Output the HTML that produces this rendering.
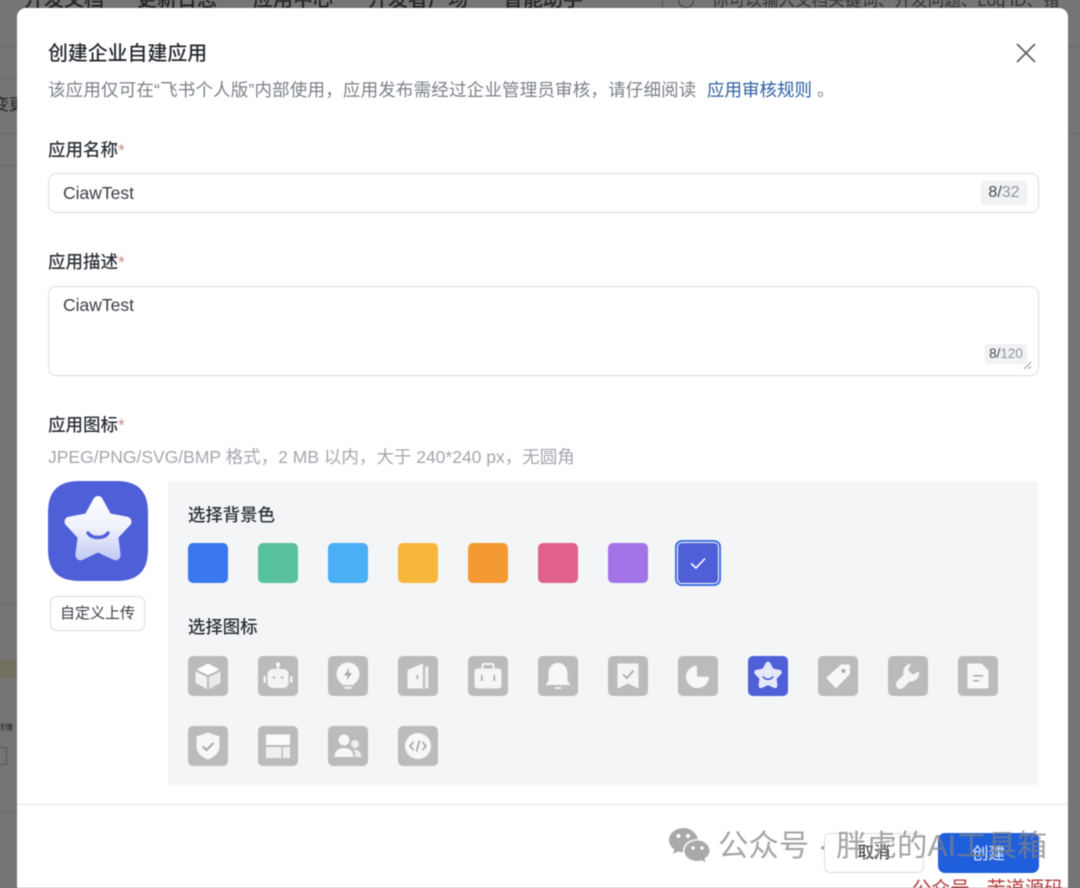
<!DOCTYPE html>
<html lang="zh">
<head>
<meta charset="utf-8">
<title>创建企业自建应用</title>
<style>
html,body{margin:0;padding:0;width:1080px;height:888px;overflow:hidden;background:#757575}
#w{position:absolute;left:0;top:0;width:1080px;height:888px;overflow:hidden;background:#757575;font-family:"Liberation Sans","Noto Sans CJK SC",sans-serif;color:#1f2329;filter:blur(.45px)}
.a{position:absolute;white-space:nowrap}
.modal{position:absolute;left:17px;top:8px;width:1051px;height:880px;background:#fff;border-radius:9px 9px 0 0;overflow:hidden}
.lab{position:absolute;left:48px;font-size:17.5px;line-height:24px;font-weight:500;color:#2b2f36;white-space:nowrap}
.lab i{font-style:normal;color:#c98a8a;font-weight:400}
.inp{position:absolute;left:47.5px;width:989px;background:#fff;border:1.5px solid #dcdde0;border-radius:8px}
.val{position:absolute;left:63px;font-size:17.5px;line-height:24px;color:#3a3e44}
.cnt{position:absolute;background:#f1f2f3;border-radius:3px;text-align:center;color:#8f959e}
.cnt b{font-weight:400;color:#444a52}
.c{position:absolute;top:543px;width:40px;height:40px;border-radius:5px}
.t{position:absolute;width:40px;height:40px;border-radius:5px;background:#b9bbbd}
.t svg{display:block;width:40px;height:40px}
.nav{position:absolute;top:-12px;font-size:20px;line-height:24px;color:#222;font-weight:500;white-space:nowrap}
</style>
</head>
<body>
<div id="w">
<!-- background page -->
<div class="nav" style="left:24px">开发文档</div>
<div class="nav" style="left:137px">更新日志</div>
<div class="nav" style="left:253px">应用中心</div>
<div class="nav" style="left:368px">开发者广场</div>
<div class="nav" style="left:503px">智能助手</div>
<div class="a" style="left:662px;top:0;width:1px;height:8px;background:#555"></div>
<div class="a" style="left:678px;top:-8px;width:14px;height:14px;border:1.5px solid #3a3a3a;border-radius:50%"></div>
<div class="a" style="left:712px;top:-11px;font-size:16.6px;line-height:24px;color:#333">你可以输入文档关键词、开发问题、Log ID、错</div>
<div class="a" style="left:0;top:46px;width:17px;height:1px;background:#666"></div>
<div class="a" style="left:0;top:78px;width:17px;height:1px;background:#666"></div>
<div class="a" style="left:0;top:133px;width:17px;height:1px;background:#666"></div>
<div class="a" style="left:0;top:165px;width:17px;height:1px;background:#666"></div>
<div class="a" style="left:-7px;top:94px;font-size:16px;line-height:24px;color:#222">变更</div>
<div class="a" style="left:0;top:603px;width:17px;height:1px;background:#666"></div>
<div class="a" style="left:0;top:660px;width:17px;height:18px;background:#74705f"></div>
<div class="a" style="left:-3px;top:722px;font-size:8px;line-height:12px;color:#222">详情</div>
<div class="a" style="left:-12px;top:747px;width:17px;height:16px;border:1px solid #555;border-radius:2px"></div>
<div class="a" style="left:0;top:812px;width:17px;height:1px;background:#666"></div>
<div class="a" style="left:1068px;top:46px;width:12px;height:1px;background:#666"></div>
<div class="a" style="left:1068px;top:133px;width:12px;height:1px;background:#666"></div>

<div class="modal"></div>

<div class="a" style="left:48px;top:41px;font-size:19.9px;line-height:26px;font-weight:500;color:#24282e">创建企业自建应用</div>
<svg class="a" style="left:1015px;top:42px" width="22" height="22" viewBox="0 0 22 22"><path d="M2 2L20 20M20 2L2 20" stroke="#5f6368" stroke-width="1.8" fill="none"/></svg>
<div class="a" style="left:48px;top:78px;font-size:17.5px;letter-spacing:.18px;line-height:24px;color:#7b8087">该应用仅可在“飞书个人版”内部使用，应用发布需经过企业管理员审核，请仔细阅读</div>
<div class="a" style="left:707px;top:78px;font-size:17.5px;line-height:24px;color:#2f5f9f">应用审核规则</div>
<div class="a" style="left:817px;top:78px;font-size:17.5px;line-height:24px;color:#7b8087">。</div>

<div class="lab" style="top:138px">应用名称<i>*</i></div>
<div class="inp" style="top:173px;height:37.5px"></div>
<div class="val" style="top:181px">CiawTest</div>
<div class="cnt" style="left:981px;top:181px;width:46px;height:24px;line-height:24px;font-size:16px"><b>8/</b>32</div>

<div class="lab" style="top:250px">应用描述<i>*</i></div>
<div class="inp" style="top:286px;height:87.500px"></div>
<div class="val" style="top:293px">CiawTest</div>
<div class="cnt" style="left:985px;top:344px;width:42px;height:20px;line-height:20px;font-size:13.5px"><b>8/</b>120</div>
<svg class="a" style="left:1023px;top:361px" width="10" height="9" viewBox="0 0 10 9"><path d="M1 8L8 1M5 8L8 5" stroke="#9a9ea3" stroke-width="1" fill="none"/></svg>

<div class="lab" style="top:413px">应用图标<i>*</i></div>
<div class="a" style="left:48px;top:445px;font-size:17.5px;line-height:24px;color:#a3a7ad">JPEG/PNG/SVG/BMP 格式，2 MB 以内，大于 240*240 px，无圆角</div>

<!-- big icon -->
<svg class="a" style="left:48px;top:481px" width="100" height="100" viewBox="0 0 100 100">
<defs>
<linearGradient id="g" gradientUnits="userSpaceOnUse" x1="0" y1="15" x2="0" y2="80"><stop offset="0" stop-color="#ffffff"/><stop offset=".5" stop-color="#eef0fb"/><stop offset="1" stop-color="#c0c8f3"/></linearGradient>
</defs>
<path d="M32 0H68C90 0 100 10 100 32V68C100 90 90 100 68 100H32C10 100 0 90 0 68V32C0 10 10 0 32 0Z" fill="#4f5fd8"/>
<path d="M50 20L59.400 37.100L78.500 40.700L65.200 54.900L67.600 74.300L50 66L32.400 74.300L34.800 54.900L21.500 40.700L40.600 37.100Z" fill="url(#g)" stroke="url(#g)" stroke-width="10" stroke-linejoin="round"/>
<path d="M40 52C44 58 56 58 60 52" stroke="#4f5fd8" stroke-width="3.400" stroke-linecap="round" fill="none"/>
</svg>
<div class="a" style="left:50px;top:596px;width:93px;height:33px;border:1.5px solid #dcdde0;border-radius:6px;background:#fff;text-align:center;line-height:33px;font-size:15px;color:#3a3e44">自定义上传</div>

<!-- panel -->
<div class="a" style="left:168px;top:481px;width:870px;height:304px;background:#f3f5f7;border-radius:2px"></div>
<div class="a" style="left:188px;top:503px;font-size:17.4px;line-height:24px;font-weight:500;color:#2b2f36">选择背景色</div>
<div class="c" style="left:188px;background:#3a78f0"></div>
<div class="c" style="left:258px;background:#58c2a0"></div>
<div class="c" style="left:328px;background:#4aaff5"></div>
<div class="c" style="left:398px;background:#f7b63c"></div>
<div class="c" style="left:468px;background:#f39a33"></div>
<div class="c" style="left:538px;background:#e0608e"></div>
<div class="c" style="left:608px;background:#a274e8"></div>
<div class="a" style="left:675px;top:540px;width:42px;height:42px;border:2px solid #3f6fe0;border-radius:7px;background:#fff"></div>
<svg class="a" style="left:678px;top:543px" width="40" height="40" viewBox="0 0 40 40"><rect width="40" height="40" rx="4" fill="#4f5fd8"/><path d="M13 20.500L18 25L27 15.500" stroke="#fff" stroke-width="1.600" fill="none"/></svg>

<div class="a" style="left:188px;top:615px;font-size:17.4px;line-height:24px;font-weight:500;color:#2b2f36">选择图标</div>

<!-- icon grid -->
<div class="t" style="left:188px;top:656px"><svg viewBox="0 0 40 40"><path d="M20 7.500L31.500 13.500L20 19L8.500 13.500Z" fill="#fff"/><path d="M7.500 15.500L19 21V33L7.500 27Z" fill="#f1f2f3"/><path d="M32.500 15.500L21 21V33L32.500 27Z" fill="#e9eaec"/></svg></div>
<div class="t" style="left:258px;top:656px"><svg viewBox="0 0 40 40"><rect x="19" y="8" width="2" height="6" fill="#fff"/><circle cx="20" cy="8.500" r="2" fill="#fff"/><rect x="9.500" y="13" width="21" height="19" rx="5" fill="#f3f4f5"/><rect x="5.500" y="20" width="2.500" height="7" rx="1.200" fill="#f3f4f5"/><rect x="32" y="20" width="2.500" height="7" rx="1.200" fill="#f3f4f5"/><circle cx="16" cy="21.500" r="1.300" fill="#b6b8ba"/><circle cx="24" cy="21.500" r="1.300" fill="#b6b8ba"/></svg></div>
<div class="t" style="left:328px;top:656px"><svg viewBox="0 0 40 40"><path d="M20 6.500A11.500 11.500 0 0 1 26 27.800V29H14V27.800A11.500 11.500 0 0 1 20 6.500Z" fill="#f6f7f8"/><rect x="16" y="30.500" width="8" height="2.500" rx="1.200" fill="#eceded"/><path d="M21.500 11.500L16 19.500H19.500L18.500 24.500L24 17H20.500Z" fill="#a6a8ab"/></svg></div>
<div class="t" style="left:398px;top:656px"><svg viewBox="0 0 40 40"><path d="M9.500 14L25 7.500V32.500H11C10 32.500 9.500 32 9.500 31Z" fill="#f4f5f6"/><rect x="27" y="10.500" width="3.500" height="22" rx="1" fill="#eeeff0"/><rect x="18.500" y="19" width="1.600" height="4" fill="#a6a8ab"/></svg></div>
<div class="t" style="left:468px;top:656px"><svg viewBox="0 0 40 40"><path d="M14.500 12.500V9.500C14.500 8.500 15 8 16 8H24C25 8 25.500 8.500 25.500 9.500V12.500" stroke="#f4f5f6" stroke-width="2" fill="none"/><rect x="6.500" y="12.500" width="27" height="20" rx="3" fill="#f4f5f6"/><rect x="13" y="19" width="1.600" height="6" fill="#a6a8ab"/><rect x="25.500" y="19" width="1.600" height="6" fill="#a6a8ab"/></svg></div>
<div class="t" style="left:538px;top:656px"><svg viewBox="0 0 40 40"><path d="M20 7C26.500 7 29.500 12 29.500 18V24.500L32.500 29H7.500L10.500 24.500V18C10.500 12 13.500 7 20 7Z" fill="#f6f7f8"/><rect x="16.500" y="31" width="7" height="2" rx="1" fill="#eeeff0"/></svg></div>
<div class="t" style="left:608px;top:656px"><svg viewBox="0 0 40 40"><path d="M9.500 7.500H30.500V32.500L20 27.500L9.500 32.500Z" fill="#f4f5f6"/><path d="M15 18.500L19 22L25.500 14.500" stroke="#a6a8ab" stroke-width="1.800" fill="none"/></svg></div>
<div class="t" style="left:678px;top:656px"><svg viewBox="0 0 40 40"><path d="M19 9.500V20.500L31 21C31 27.500 25.500 32 19.500 32A11.200 11.200 0 0 1 19 9.500Z" fill="#f6f7f8"/></svg></div>
<div class="t" style="left:748px;top:656px;background:#4f5fd8"><svg viewBox="0 0 40 40"><g transform="scale(.4)"><path d="M50 20L59.400 37.100L78.500 40.700L65.200 54.900L67.600 74.300L50 66L32.400 74.300L34.800 54.900L21.500 40.700L40.600 37.100Z" fill="#e6e9fa" stroke="#e6e9fa" stroke-width="12" stroke-linejoin="round"/><path d="M38 52C43 60 57 60 62 52" stroke="#4f5fd8" stroke-width="4" stroke-linecap="round" fill="none"/></g></svg></div>
<div class="t" style="left:818px;top:656px"><svg viewBox="0 0 40 40"><path d="M23 8.500H31C31.600 8.500 32 9 32 9.500V18L18 32.500L8 22Z" fill="#f6f7f8"/><circle cx="25.500" cy="15" r="2" fill="#a6a8ab"/></svg></div>
<div class="t" style="left:888px;top:656px"><svg viewBox="0 0 40 40"><path d="M23 7.500L20 14L24.500 18.500L31 15.500C32 21.500 27.500 26 21.500 25.500L15 32C12.500 34 8.500 32.500 8 29C7.800 27.500 8.200 26 9.500 25L15.500 19C14.500 12.500 18 8 23 7.500Z" fill="#f4f5f6"/></svg></div>
<div class="t" style="left:958px;top:656px"><svg viewBox="0 0 40 40"><path d="M10.500 7.500H23.500L30.500 14.500V31C30.500 32 30 32.500 29 32.500H11C10 32.500 9.500 32 9.500 31V8.500C9.500 8 10 7.500 10.500 7.500Z" fill="#f6f7f8"/><rect x="15" y="19" width="10" height="1.500" fill="#a6a8ab"/><rect x="15" y="24" width="6" height="1.500" fill="#a6a8ab"/></svg></div>

<div class="t" style="left:188px;top:726px"><svg viewBox="0 0 40 40"><path d="M20 6.500L31.500 10.500V20C31.500 27 26 31.500 20 33.500C14 31.500 8.500 27 8.500 20V10.500Z" fill="#f6f7f8"/><path d="M14.500 20.500L18.500 24L25.500 17" stroke="#a6a8ab" stroke-width="2" fill="none"/></svg></div>
<div class="t" style="left:258px;top:726px"><svg viewBox="0 0 40 40"><rect x="8" y="8.500" width="24" height="10.500" fill="#fbfbfb"/><rect x="8" y="21" width="15.500" height="11" fill="#eeeff0"/><rect x="25" y="21" width="7" height="11" fill="#eeeff0"/></svg></div>
<div class="t" style="left:328px;top:726px"><svg viewBox="0 0 40 40"><circle cx="16" cy="14" r="5.500" fill="#f6f7f8"/><path d="M6.500 31C6.500 25 10.500 22 16 22C21.500 22 25.500 25 25.500 31Z" fill="#f6f7f8"/><circle cx="27" cy="18" r="4" fill="#eceded"/><path d="M27 31C27.500 27 26.500 25 25.500 23.700C30 23.500 33.500 26 33.500 31Z" fill="#eceded"/></svg></div>
<div class="t" style="left:398px;top:726px"><svg viewBox="0 0 40 40"><circle cx="20" cy="20" r="13" fill="#f6f7f8"/><path d="M15.500 16L12 20L15.500 24M24.500 16L28 20L24.500 24M21.500 14.500L18.500 25.500" stroke="#a0a2a5" stroke-width="1.600" fill="none"/></svg></div>

<!-- footer -->
<div class="a" style="left:17px;top:804px;width:1051px;height:1px;background:#e2e3e5"></div>
<div class="a" style="left:824px;top:833px;width:98px;height:38px;border:1.5px solid #dcdde0;border-radius:6px;background:#fff;text-align:center;line-height:38px;font-size:16.5px;color:#2b2f36">取消</div>
<div class="a" style="left:938px;top:833px;width:101px;height:40px;border-radius:7px;background:#1f5fdc;text-align:center;line-height:42px;font-size:16.5px;color:#e8eefc">创建</div>

<!-- watermark -->
<svg class="a" style="left:668px;top:827px" width="42" height="36" viewBox="0 0 42 36">
<path d="M15.500 1C7.500 1 1 6.500 1 13C1 17 3 20 6.500 22.500L5 27L10 24.500C11.500 25 13 25.200 15 25.300C14.500 17 21 12 30 12.200C28.500 6 22.500 1 15.500 1Z" fill="#a9a9a9"/>
<path d="M29.500 13.500C22.500 13.500 16.500 18 16.500 24C16.500 30 22.500 34 29.500 34C31 34 32.500 33.800 33.800 33.300L37.500 35.500L36.500 31.500C39.500 29.500 41.500 27 41.500 24C41.500 18 36 13.500 29.500 13.500Z" fill="#a9a9a9"/>
<circle cx="10.500" cy="9" r="2" fill="#fff"/><circle cx="20" cy="9" r="2" fill="#fff"/><circle cx="25" cy="21" r="1.700" fill="#fff"/><circle cx="34" cy="21" r="1.700" fill="#fff"/>
</svg>
<div class="a" style="left:718px;top:828px;font-size:30.400px;line-height:36px;color:rgba(130,130,130,.72)">公众号 · 胖虎的AI工具箱</div>
<div class="a" style="left:912px;top:878px;width:156px;height:24px;overflow:hidden;font-size:19.200px;line-height:24px;color:#b03a3a">公众号 · 苦道源码</div>
</div>
</body>
</html>
